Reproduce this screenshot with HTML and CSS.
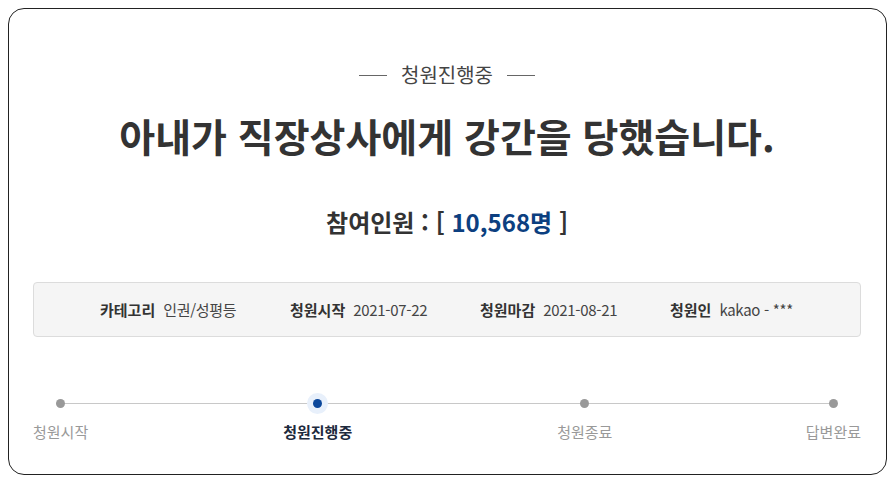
FILE: index.html
```html
<!DOCTYPE html>
<html lang="ko">
<head>
<meta charset="utf-8">
<link rel="stylesheet" href="styles.css">
</head>
<body>
<div class="card">
  <div class="status"><span class="dash"></span><span class="status-text">청원진행중</span><span class="dash"></span></div>
  <h1 class="title">아내가 직장상사에게 강간을 당했습니다.</h1>
  <div class="count">참여인원 : [ <span class="num">10,568명</span> ]</div>
  <div class="info">
    <div class="info-item"><span class="lbl">카테고리</span><span class="val">인권/성평등</span></div>
    <div class="info-item"><span class="lbl">청원시작</span><span class="val">2021-07-22</span></div>
    <div class="info-item"><span class="lbl">청원마감</span><span class="val">2021-08-21</span></div>
    <div class="info-item"><span class="lbl">청원인</span><span class="val">kakao - ***</span></div>
  </div>
  <div class="progress">
    <div class="track"></div>
    <div class="step"><span class="dot"></span><span class="step-lbl">청원시작</span></div>
    <div class="step active s2"><span class="dot"></span><span class="step-lbl">청원진행중</span></div>
    <div class="step s3"><span class="dot"></span><span class="step-lbl">청원종료</span></div>
    <div class="step s4"><span class="dot"></span><span class="step-lbl">답변완료</span></div>
  </div>
</div>
</body>
</html>
```
FILE: styles.css
```css
html, body { margin: 0; padding: 0; background: #fff; }
body {
  padding: 8px;
  font-family: "Noto Sans CJK KR", "Noto Sans", sans-serif;
  color: #333;
}
.card {
  box-sizing: border-box;
  height: 467px;
  border: 1px solid #222;
  border-radius: 16px;
  padding: 52px 25px 0 24px;
}
.status {
  display: flex;
  justify-content: center;
  align-items: center;
  gap: 14px;
  height: 28px;
}
.dash { width: 28px; height: 1px; background: #666; }
.status-text { font-size: 20px; color: #444; line-height: 28px; }
.title {
  margin: 22px 0 0;
  text-align: center;
  font-size: 39px;
  font-weight: 700;
  line-height: 48px;
  color: #333;
  letter-spacing: 0;
}
.count {
  margin-top: 47px;
  text-align: center;
  font-size: 24px;
  font-weight: 700;
  line-height: 32px;
  color: #333;
}
.num { color: #0c3f80; }
.info {
  margin-top: 44px;
  height: 55px;
  box-sizing: border-box;
  background: #f5f5f5;
  border: 1px solid #dcdcdc;
  border-radius: 4px;
  display: flex;
  align-items: center;
  padding-left: 66px;
  font-size: 15px;
}
.info-item { width: 191px; display: flex; gap: 8px; }
.lbl { font-weight: 700; color: #333; }
.val { color: #444; letter-spacing: -0.3px; }
.progress {
  position: relative;
  margin-top: 60px;
  display: flex;
}
.track {
  position: absolute;
  left: 26px; right: 26px;
  top: 6px;
  height: 1px;
  background: #c8c8c8;
}
.step {
  position: relative;
  display: flex;
  flex-direction: column;
  align-items: center;
  gap: 13px;
}
.s2 { margin-left: 195px; }
.s3 { margin-left: 205px; }
.s4 { margin-left: auto; }
.dot {
  width: 9px; height: 9px;
  border-radius: 50%;
  background: #999;
  margin-top: 2px;
}
.step.active .dot {
  background: #0b479b;
  box-shadow: 0 0 0 6px #e8f0fb;
}
.step-lbl { font-size: 15px; color: #999; line-height: 22px; }
.step.active .step-lbl { color: #1d2a3d; font-weight: 700; }
```
